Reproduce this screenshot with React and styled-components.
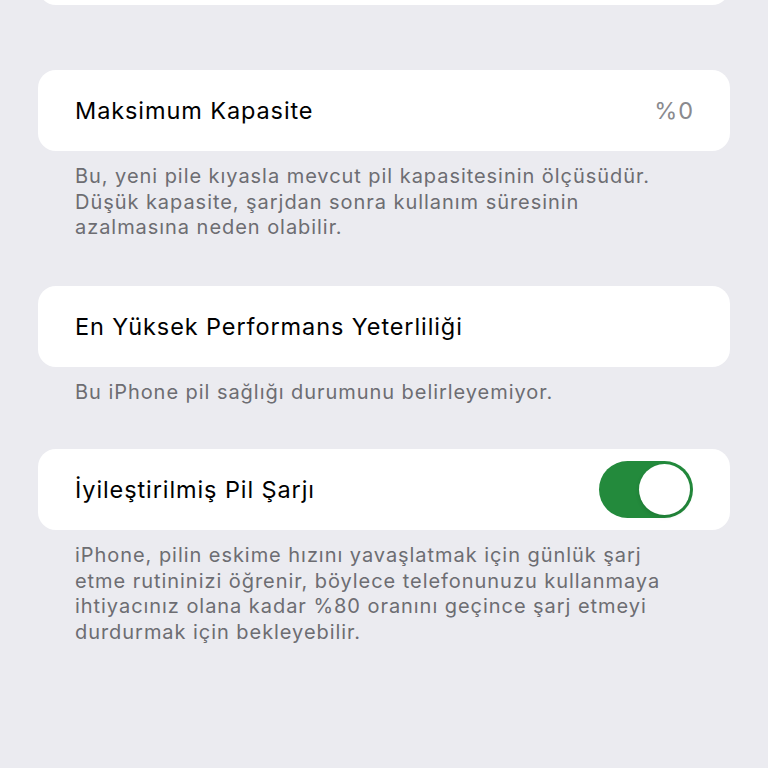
import React, { useState } from 'react';
import styled, { createGlobalStyle } from 'styled-components';

const GlobalStyle = createGlobalStyle`
  html, body {
    margin: 0;
    padding: 0;
    background: #ebebf0;
  }
  body {
    font-family: Inter, "Noto Sans", "Liberation Sans", sans-serif;
    -webkit-font-smoothing: antialiased;
  }
`;

const Page = styled.div`
  width: 768px;
  height: 768px;
  overflow: hidden;
  padding: 0 38px;
  box-sizing: border-box;
`;

const Group = styled.section`
  margin-bottom: ${({ $gap }) => $gap || 45}px;
`;

const Card = styled.div`
  background: #ffffff;
  border-radius: 18px;
  min-height: 81px;
  padding: 0 37px;
  display: flex;
  align-items: center;
  justify-content: space-between;
  box-sizing: border-box;
`;

// the previous card sits mostly above the fold, only its bottom edge shows
const CutCard = styled(Card)`
  min-height: 40px;
  margin-top: -35px;
`;

const Label = styled.span`
  font-size: 23.5px;
  color: #000;
  letter-spacing: 0.9px;
`;

const Value = styled.span`
  font-size: 23.5px;
  color: #8a8a8e;
  letter-spacing: 0.9px;
  margin-right: -1px;
`;

const Footer = styled.p`
  margin: 0;
  padding: 13px 37px 0;
  font-size: 20px;
  line-height: 25.5px;
  letter-spacing: 0.95px;
  color: #6d6d72;
`;

const Switch = styled.button`
  width: 94px;
  height: 57px;
  border: none;
  padding: 3px;
  border-radius: 29px;
  background: ${({ $on }) => ($on ? '#238a3c' : '#e3e3e8')};
  display: flex;
  justify-content: ${({ $on }) => ($on ? 'flex-end' : 'flex-start')};
  cursor: pointer;
  box-sizing: border-box;
`;

const Knob = styled.span`
  width: 51px;
  height: 51px;
  border-radius: 50%;
  background: #fff;
  box-shadow: 0 2px 4px rgba(0, 0, 0, 0.12);
`;

export default function App() {
  const [optimized, setOptimized] = useState(true);

  return (
    <Page>
      <GlobalStyle />
      <Group $gap={65}>
        <CutCard />
      </Group>

      <Group>
        <Card>
          <Label>Maksimum Kapasite</Label>
          <Value>%0</Value>
        </Card>
        <Footer>
          Bu, yeni pile kıyasla mevcut pil kapasitesinin ölçüsüdür.
          <br />
          Düşük kapasite, şarjdan sonra kullanım süresinin
          <br />
          azalmasına neden olabilir.
        </Footer>
      </Group>

      <Group $gap={44}>
        <Card>
          <Label>En Yüksek Performans Yeterliliği</Label>
        </Card>
        <Footer>Bu iPhone pil sağlığı durumunu belirleyemiyor.</Footer>
      </Group>

      <Group>
        <Card>
          <Label>İyileştirilmiş Pil Şarjı</Label>
          <Switch $on={optimized} onClick={() => setOptimized(!optimized)}>
            <Knob />
          </Switch>
        </Card>
        <Footer>
          iPhone, pilin eskime hızını yavaşlatmak için günlük şarj
          <br />
          etme rutininizi öğrenir, böylece telefonunuzu kullanmaya
          <br />
          ihtiyacınız olana kadar %80 oranını geçince şarj etmeyi
          <br />
          durdurmak için bekleyebilir.
        </Footer>
      </Group>
    </Page>
  );
}
